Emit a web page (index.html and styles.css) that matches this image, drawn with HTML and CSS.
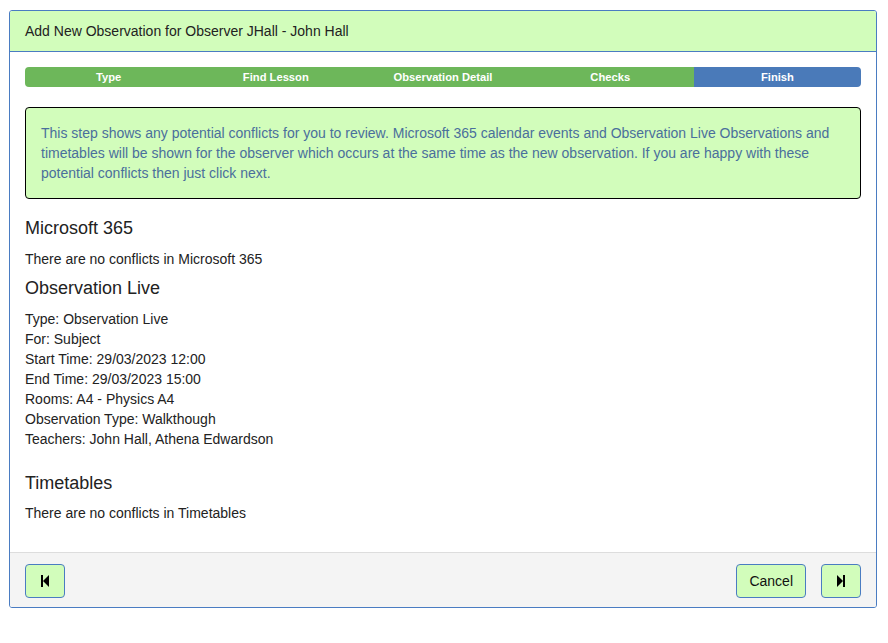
FILE: index.html
```html
<!doctype html>
<html>
    <head>
        <title>Add New Observation</title>
        <link rel="stylesheet" href="styles.css">
    </head>
    <body>
        <div class="dialog">
            <header class="dialog-head">Add New Observation for Observer JHall - John Hall</header>
            <main class="dialog-body">
                <ol class="steps">
                    <li class="done">Type</li>
                    <li class="done">Find Lesson</li>
                    <li class="done">Observation Detail</li>
                    <li class="done">Checks</li>
                    <li class="current">Finish</li>
                </ol>
                <div class="notice">
                    This step shows any potential conflicts for you to review. Microsoft 365 calendar events and Observation Live Observations and timetables will be shown for the observer which occurs at the same time as the new observation. If you are happy with these potential conflicts then just click next.
                </div>
                <h3>Microsoft 365</h3>
                <p>There are no conflicts in Microsoft 365</p>
                <h3>Observation Live</h3>
                <ul class="details">
                    <li>Type: Observation Live</li>
                    <li>For: Subject</li>
                    <li>Start Time: 29/03/2023 12:00</li>
                    <li>End Time: 29/03/2023 15:00</li>
                    <li>Rooms: A4 - Physics A4</li>
                    <li>Observation Type: Walkthough</li>
                    <li>Teachers: John Hall, Athena Edwardson</li>
                </ul>
                <h3 class="tight">Timetables</h3>
                <p>There are no conflicts in Timetables</p>
            </main>
            <footer class="dialog-foot">
                <button type="button" class="btn icon" title="Back">
                    <svg width="10" height="14" viewBox="0 0 10 14"><rect x="1" y="1" width="2" height="12" fill="#000"/><path d="M9 1 L3 7 L9 13 Z" fill="#000"/></svg>
                </button>
                <span class="spacer"></span>
                <button type="button" class="btn">Cancel</button>
                <button type="button" class="btn icon" title="Next">
                    <svg width="10" height="14" viewBox="0 0 10 14"><path d="M1 1 L7 7 L1 13 Z" fill="#000"/><rect x="7" y="1" width="2" height="12" fill="#000"/></svg>
                </button>
            </footer>
        </div>
    </body>
</html>
```

FILE: styles.css
```css
* {
    box-sizing: border-box;
}
html,
body {
    margin: 0;
    padding: 0;
    background-color: #fff;
}
body {
    font-family: "Liberation Sans", Arial, sans-serif;
    font-size: 14px;
    color: #222;
}
.dialog {
    margin: 10px 0 0 9px;
    width: 868px;
    height: 598px;
    border: 1px solid #4a7cc2;
    border-radius: 3px;
    display: flex;
    flex-direction: column;
    overflow: hidden;
}
.dialog-head {
    height: 41px;
    padding: 0 15px;
    display: flex;
    align-items: center;
    background-color: #d2fdbb;
    border-bottom: 1px solid #4a7cc2;
    color: #222;
}
.dialog-body {
    flex: 1;
    padding: 15px;
}
.steps {
    list-style: none;
    margin: 0;
    padding: 0;
    display: flex;
    height: 20px;
    border-radius: 4px;
    overflow: hidden;
}
.steps li {
    flex: 1;
    text-align: center;
    font-size: 11.2px;
    font-weight: bold;
    line-height: 20px;
    color: #fff;
}
.steps li.done {
    background-color: #6db75a;
}
.steps li.current {
    background-color: #4a7ab9;
}
.notice {
    margin: 20px 0 19px;
    padding: 15px;
    border: 1px solid #000;
    border-radius: 4px;
    background-color: #d2fdbb;
    color: #4a6f9c;
    line-height: 20px;
}
h3 {
    margin: 0 0 10px;
    font-size: 18px;
    font-weight: normal;
    line-height: 21px;
    color: #222;
}
h3.tight {
    margin-bottom: 9px;
}
p {
    margin: 0 0 9px;
    line-height: 20px;
}
.details {
    list-style: none;
    margin: 0 0 24px;
    padding: 0;
    line-height: 20px;
}
.dialog-foot {
    height: 55px;
    padding: 11px 15px 9px;
    display: flex;
    align-items: flex-start;
    gap: 15px;
    background-color: #f4f4f4;
    border-top: 1px solid #ddd;
}
.spacer {
    flex: 1;
}
.btn {
    height: 34px;
    padding: 0 12px;
    font-family: inherit;
    font-size: 14px;
    color: #111;
    background-color: #d2fdbb;
    border: 1px solid #4a7cc2;
    border-radius: 4px;
    display: flex;
    align-items: center;
    justify-content: center;
}
.btn.icon {
    width: 40px;
    padding: 0;
}
```
